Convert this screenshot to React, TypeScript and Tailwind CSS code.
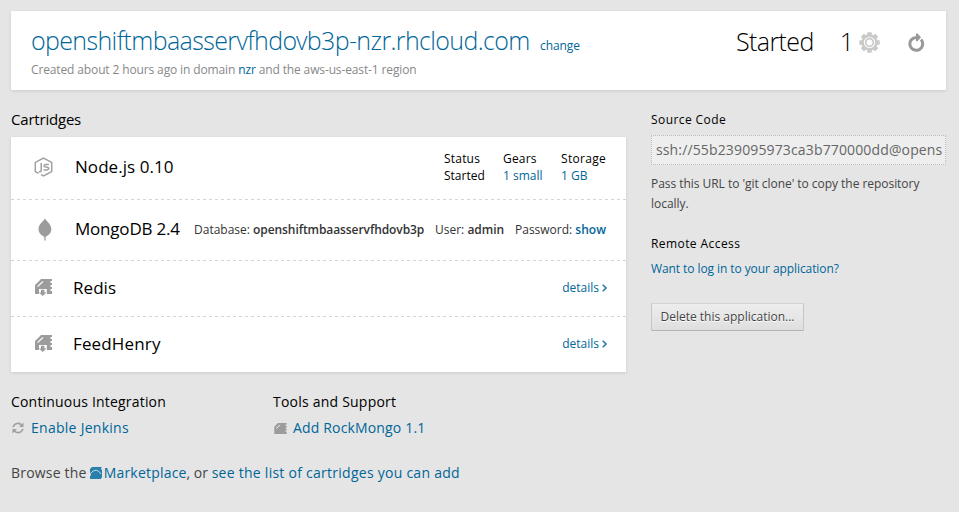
import React from "react";

const link = "text-[#006699]";
const light = "font-['Open_Sans_Light','Open_Sans',sans-serif] font-light";
const dashed =
  "border-t border-transparent bg-[repeating-linear-gradient(90deg,#d6d6d6_0_3px,transparent_3px_6px)] bg-[length:100%_1px] bg-no-repeat bg-origin-border";

function Cartridge({ small = false }: { small?: boolean }) {
  return (
    <svg viewBox={small ? "0 0 17 15" : "0 0 17 17"} className={small ? "h-[11px] w-[13px]" : "h-[17px] w-[17px]"} fill="#9c9c9c">
      {small ? (
        <path d="M5 0H17V2H15.5V4H17V6H15.5V8H17V10H15.5V12H17V15H0V5Z" />
      ) : (
        <path d="M6 0H17V2H15.5V4H17V6H15.5V8H17V10H15.5V12H17V15H11.8V10H4V15H0V6Z" />
      )}
      {!small && <path d="M6 10.8H9.4V13.5H11.5L7.6 17L4 13.5H6Z" />}
      <path d="M2.6 7.4L8 2.6" stroke="#f4f4f4" strokeWidth="1.3" fill="none" />
    </svg>
  );
}

function NodeIcon() {
  return (
    <svg viewBox="0 0 19 20" className="h-5 w-[19px]" fill="none" stroke="#a0a0a0" strokeWidth="1.5">
      <path d="M7 17.7L9.5 19L17.7 14.6V5.4L9.5 1L1.3 5.4V14.6L4.6 16.4" />
      <path d="M7.2 6V13.6Q7.2 15 4.8 14.6" />
      <path d="M14.8 7.4H11.7Q10 7.4 10 8.7Q10 10 12 10.1Q14.7 10.2 14.7 11.6Q14.7 13 12.2 13H9.5" />
    </svg>
  );
}

function MongoIcon() {
  return (
    <svg viewBox="0 0 14 23" className="h-[23px] w-[14px]" fill="#9c9c9c">
      <path d="M7 0.5C8.5 3.5 13.3 6 13.3 11C13.3 15 10.5 17.5 7.6 18.8V22.5H6.3V18.8C3.5 17.5 0.5 15 0.5 11C0.5 6 5.5 3.5 7 0.5Z" />
    </svg>
  );
}

function GearIcon() {
  return (
    <svg viewBox="-10.5 -10.5 21 21" className="mt-[2px] h-[21px] w-[21px]">
      <g fill="#cacaca">
        {[0, 45, 90, 135].map((a) => (
          <rect key={a} x="-2.3" y="-10.2" width="4.6" height="20.4" rx="0.6" transform={`rotate(${a})`} />
        ))}
        <circle r="8.2" />
      </g>
      <circle r="5.6" fill="#fff" />
      <circle r="3.8" fill="none" stroke="#cacaca" strokeWidth="1.7" />
    </svg>
  );
}

function RestartIcon() {
  return (
    <svg viewBox="0 0 17 19" className="mt-[2px] h-[19px] w-[17px]" fill="none">
      <path d="M13 6.6A6.4 6.4 0 1 1 8.5 4.5" stroke="#999" strokeWidth="3" />
      <path d="M8 0.5H9.5L13 4.3L9.5 8.3H8Z" fill="#999" />
    </svg>
  );
}

function SyncIcon() {
  return (
    <svg viewBox="0 0 12 12" className="h-3 w-3" fill="none" stroke="#a0a0a0" strokeWidth="1.6">
      <path d="M1.2 5.2A4.9 4.9 0 0 1 9.8 3.2M10.8 6.8A4.9 4.9 0 0 1 2.2 8.8" />
      <path d="M11.5 0.5V5H7ZM0.5 11.5V7H5Z" fill="#a0a0a0" stroke="none" />
    </svg>
  );
}

function MarketIcon() {
  return (
    <svg viewBox="0 0 12 12" className="h-3 w-3">
      <path d="M2 0H12L10.8 1.5L12 3V10.5L10.5 12H0V9.5L1 7.5L0 5.5V2Z" fill="#2b7fab" />
      <path d="M0.5 6.5Q3 3 6.3 3.2Q9 3.5 11 7" stroke="#d5e2e8" strokeWidth="0.9" fill="none" />
    </svg>
  );
}

function DetailsRow({ name, spacing }: { name: string; spacing: string }) {
  return (
    <div className={`flex h-14 items-center pr-[19px] pb-[2px] pl-6 ${dashed}`}>
      <Cartridge />
      <span className={`ml-[21px] text-[17px] ${spacing}`}>{name}</span>
      <a className={`ml-auto flex items-center text-[12px] ${link}`}>
        details
        <svg viewBox="0 0 5 8" className="ml-[3px] h-2 w-[5px]" fill="none" stroke="#2b7fab" strokeWidth="1.6">
          <path d="M0.7 0.7L4 4L0.7 7.3" />
        </svg>
      </a>
    </div>
  );
}

export default function App() {
  return (
    <div className="h-[512px] w-[959px] overflow-hidden bg-[#e5e5e5] pt-[11px] pl-[11px] font-['Open_Sans','Noto_Sans',sans-serif] whitespace-nowrap text-black">
      <header className="flex h-[79px] w-[935px] justify-between bg-white pr-[21px] pl-5 shadow-[0_1px_3px_rgba(0,0,0,0.12)]">
        <div className="pt-[11px]">
          <div className="flex h-[37px] items-baseline leading-9">
            <h1 className={`w-[499px] text-[25px] tracking-[-0.63px] ${light} ${link}`}>openshiftmbaasservfhdovb3p-nzr.rhcloud.com</h1>
            <a className={`ml-[10px] text-[12px] tracking-[-0.1px] ${link}`}>change</a>
          </div>
          <p className="text-[12px] leading-[22px] tracking-[-0.13px] text-[#888]">
            Created about 2 hours ago in domain <a className={link}>nzr</a> and the aws-us-east-1 region
          </p>
        </div>
        <div className={`flex h-9 items-center pt-[25px] text-[25px] ${light}`}>
          <span className="tracking-[-0.6px]">Started</span>
          <span className="mr-[5px] ml-[26px]">1</span>
          <GearIcon />
          <span className="ml-[28px]"><RestartIcon /></span>
        </div>
      </header>
      <div className="flex">
        <main className="w-[615px]">
          <h2 className="mt-[18px] mb-[7px] text-[15px] leading-[22px] tracking-[-0.2px]">Cartridges</h2>
          <section className="h-[235px] bg-white shadow-[0_1px_3px_rgba(0,0,0,0.12)]">
            <div className="flex h-[62px] items-center pr-5 pb-[2px] pl-[23px]">
              <NodeIcon />
              <span className="ml-[22px] text-[17px] tracking-[0.05px]">Node.js 0.10</span>
              <div className="ml-auto flex text-[12px] leading-[17px]">
                <div className="w-[59px]"><div className="tracking-[0.2px]">Status</div><div>Started</div></div>
                <div className="w-[58px]"><div className="tracking-[0.2px]">Gears</div><a className={link}>1 small</a></div>
                <div className="w-[45px]"><div className="tracking-[0.3px]">Storage</div><a className={link}>1 GB</a></div>
              </div>
            </div>
            <div className={`flex h-[61px] items-center pr-5 pl-[27px] text-[12px] text-[#333] ${dashed}`}>
              <span className="-mt-0.5"><MongoIcon /></span>
              <span className="-mt-0.5 ml-[23px] w-[119px] text-[17px] tracking-[-0.2px] text-black">MongoDB 2.4</span>
              <span className="w-[241px]">Database: <b className="font-semibold tracking-[-0.08px]">openshiftmbaasservfhdovb3p</b></span>
              <span className="w-[80px]">User: <b className="font-semibold">admin</b></span>
              <span>Password: <b className="font-semibold text-[#006699]">show</b></span>
            </div>
            <DetailsRow name="Redis" spacing="tracking-[0.05px]" />
            <DetailsRow name="FeedHenry" spacing="tracking-[0.15px]" />
          </section>
          <div className="mt-[19px] flex text-[14px] leading-[22px]">
            <section className="w-[262px]">
              <h3 className="tracking-[0.19px]">Continuous Integration</h3>
              <a className={`mt-1 flex items-center gap-[7px] pl-px tracking-[0.27px] ${link}`}><SyncIcon />Enable Jenkins</a>
            </section>
            <section>
              <h3 className="tracking-[0.22px]">Tools and Support</h3>
              <a className={`mt-1 flex items-center gap-[6px] pl-px tracking-[0.16px] ${link}`}><Cartridge small />Add RockMongo 1.1</a>
            </section>
          </div>
          <p className="mt-[23px] flex text-[14px] leading-[22px] tracking-[0.2px] text-[#444]">
            <span>Browse the</span>
            <a className={`ml-[3px] flex items-center gap-[2px] ${link}`}><MarketIcon />Marketplace</a>
            <span className="tracking-[0] whitespace-pre">, or </span>
            <a className={`tracking-[0.26px] ${link}`}>see the list of cartridges you can add</a>
          </p>
        </main>
        <aside className="ml-[25px] w-[295px] text-[12px] leading-5 text-[#444]">
          <h3 className="mt-5 tracking-[0.42px] text-black">Source Code</h3>
          <div className="mt-[5px] h-[30px] overflow-hidden border border-dotted border-[#bcbcbc] bg-[#eee] pl-1 text-[14px] leading-7 tracking-[0.14px] text-[#666]">ssh://55b239095973ca3b770000dd@opens</div>
          <p className="mt-[9px] tracking-[-0.04px]">Pass this URL to 'git clone' to copy the repository<br />locally.</p>
          <h3 className="mt-5 tracking-[0.42px] text-black">Remote Access</h3>
          <a className={`mt-[5px] block tracking-[-0.08px] ${link}`}>Want to log in to your application?</a>
          <button className="mt-6 h-7 w-[153px] rounded-[1px] border border-[#c6c6c6] border-t-[#d2d2d2] border-b-[#b4b4b4] bg-linear-to-b from-[#ededed] to-[#dfdfdf] text-[12px] leading-6 [text-shadow:0_1px_0_#fff]">Delete this application...</button>
        </aside>
      </div>
    </div>
  );
}
